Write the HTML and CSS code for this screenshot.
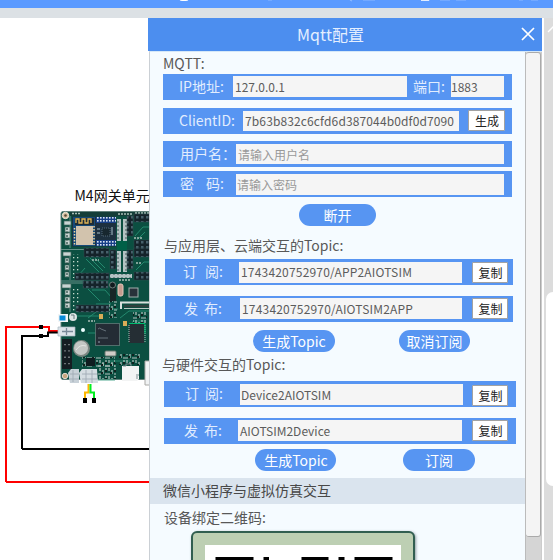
FILE: index.html
```
<!DOCTYPE html>
<html lang="zh-CN">
<head>
<meta charset="utf-8">
<title>Mqtt配置</title>
<link rel="stylesheet" href="styles.css">
</head>
<body>
<header class="topbar">
  <svg width="553" height="8" viewBox="0 0 553 8" fill="none" stroke="#d8e7ff" stroke-width="1.2">
    <path d="M180 0q4 1 8 0" stroke="#fff"/><path d="M268 0h4M350 0l2 1M363 0h12M424 0h6M440 0h10M456 0h10M519 0h4M531 0h7" opacity=".4"/><path d="M421 .4h8" stroke="#fff" opacity=".8"/>
  </svg>
</header>
<div class="toolstrip"></div>
<main class="workspace">
  <svg class="canvas" width="553" height="542" viewBox="0 18 553 542">
    <defs>
      <pattern id="pins" width="5" height="5" patternUnits="userSpaceOnUse"><rect width="5" height="5" fill="#15232a"/><rect x="1" y="1" width="2.5" height="2.5" fill="#47606b"/></pattern>
      <pattern id="bluepins" width="3" height="3" patternUnits="userSpaceOnUse"><rect width="3" height="3" fill="#173f87"/><rect x="1" y="1" width="1.6" height="1.6" fill="#d8e4f3"/></pattern>
      <pattern id="greypins" width="4" height="4" patternUnits="userSpaceOnUse"><rect width="4" height="4" fill="#b4c2c3"/><rect x="1" y="1" width="2" height="2" fill="#7b8d8f"/></pattern>
      <pattern id="parts" width="9" height="8" patternUnits="userSpaceOnUse"><path d="M1 0v3M4 2v4M7 0v2M6 6h3M0 6h2" stroke="#b4c4bf" stroke-width="1.2"/><path d="M2 5h2M6 3h2" stroke="#11221f" stroke-width="2"/></pattern>
      <pattern id="vias" width="4" height="4" patternUnits="userSpaceOnUse"><rect x="1" y="1" width="1.3" height="1.3" fill="#c5dacd"/></pattern>
    </defs>
    <text class="unit" x="74.500" y="201">M4网关单元</text>
    <rect x="61" y="211.500" width="96" height="168" rx="2" fill="#0b4f41" stroke="#61817b"/>
    <rect x="70" y="212" width="80" height="4" fill="#143e38"/>
    <path d="M61 249.500h23M61 281h23M61 283h23M70 216v32M70 254v26M70 286v26" stroke="#7ea29a" stroke-width=".8" fill="none"/>
    <g stroke="#2b987a" stroke-width=".8" fill="none"><path d="M86 259l13 13M90 258l13 13M95 258l10 10M78 276l7-8M135 236l8-9h7M137 240l8-8M137 246h12M136 270l8-8h6M88 289l12 12M92 290h13l7 8M96 304h15M88 318l12-9h18M76 316h23M88 333h7M120 318l9-7h20M133 325v-4h13M90 380h25M110 361h20"/></g>
    <path d="M72 213.500h8M118 214h15M135 213h14M92 260h7M134 238h8M136 263h6M119 280h12M88 321h7" stroke="#a9bfb7" stroke-width="1.300" stroke-dasharray="2 1"/>
    <rect x="72" y="254" width="7" height="24" fill="url(#vias)"/><rect x="72" y="288" width="7" height="24" fill="url(#vias)"/>
    <circle cx="65.500" cy="215.500" r="3.200" fill="#dac4a2" stroke="#f1e7dc"/><circle cx="65.500" cy="215.500" r="1.300" fill="#574b3a"/>
    <g fill="#c9d4d2" stroke="#42675f" stroke-width=".7">
      <rect x="64" y="221" width="7" height="4"/><rect x="65" y="227" width="5" height="5"/><rect x="65" y="233" width="5" height="5"/><rect x="65" y="240" width="5" height="5"/>
      <rect x="63" y="252" width="8" height="4"/><rect x="65" y="258" width="4" height="5"/><rect x="65" y="265" width="4" height="5"/><rect x="65" y="272" width="4" height="5"/>
      <rect x="62" y="284" width="9" height="4"/><rect x="65" y="290" width="5" height="5"/><rect x="65" y="297" width="5" height="5"/><rect x="65" y="303" width="5" height="5"/>
    </g>
    <path d="M67 228v16M67 259v18M67 291v16" stroke="#24463e" stroke-width="1.200" stroke-dasharray="2 1.500"/>
    <path d="M72 216.500h44v30H72z" fill="#1d303f"/><path d="M73 217h22v29H73z" fill="#164a78"/>
    <path d="M75 218h19v7H75z" fill="#1c2c38"/>
    <rect x="76" y="226" width="17" height="19" fill="#d2c3ad"/>
    <path d="M76 223v-4h3v4h3v-4h3v4h3v-4h3v4" fill="none" stroke="#e1b556" stroke-width="1.300"/>
    <path d="M74.500 228v17M94 226v19" stroke="#f1d59b" stroke-width="1.500" stroke-dasharray="1.500 1.500"/>
    <rect x="96" y="217" width="20" height="6" fill="url(#bluepins)"/><rect x="96" y="240" width="20" height="6" fill="url(#bluepins)"/>
    <rect x="102" y="228" width="8" height="8" fill="#17272f" stroke="#53697a" stroke-dasharray="1"/><path d="M97 229h3M97 233h3M112 227v8" stroke="#aac1cc"/>
    <g fill="url(#greypins)"><rect x="117" y="219" width="4" height="22"/><rect x="123" y="219" width="4" height="22"/><rect x="117" y="251" width="4" height="21"/><rect x="123" y="251" width="4" height="21"/><rect x="110" y="274" width="22" height="4"/></g>
    <rect x="117" y="241" width="10" height="9" fill="#006047"/>
    <g fill="url(#pins)" stroke="#334d50" stroke-width=".5">
      <rect x="127" y="216" width="6" height="20"/><rect x="134" y="214" width="16" height="8"/><rect x="134" y="240" width="16" height="9"/><rect x="84" y="248" width="25" height="9"/><rect x="110" y="250" width="6" height="19"/><rect x="127" y="250" width="6" height="19"/><rect x="134" y="248" width="16" height="9"/><rect x="75" y="273" width="34" height="7"/><rect x="134" y="272" width="16" height="8"/><rect x="83" y="281" width="25" height="7"/><rect x="76" y="305" width="33" height="7"/>
    </g>
    <rect x="110" y="284" width="6" height="17" fill="#172627"/><circle cx="112.500" cy="285" r="3" fill="#111b1e" stroke="#71817e"/>
    <rect x="118" y="284" width="5" height="12" rx="2" fill="#c49c8f" stroke="#e5c9bd"/>
    <rect x="129" y="288" width="9" height="9" fill="#28323a" stroke="#a1afad"/><path d="M121 309v-6.500h29" stroke="#d9dfdc" stroke-width="2" fill="none"/><path d="M124 306h26" stroke="#2f403d" stroke-width="2.500"/><path d="M124 308.500h26" stroke="#bac7c2"/>
    <rect x="109" y="301" width="8" height="17" fill="url(#parts)"/><rect x="133" y="312" width="14" height="11" fill="url(#parts)"/>
    <rect x="95.500" y="323.500" width="24" height="22" fill="#242c35" stroke="#8fa09e" stroke-dasharray="1 1"/><path d="M98 329q2-2 3 0l5 2M98 338h10" stroke="#65717a" fill="none"/><circle cx="99" cy="342" r="1" fill="#6c7a85"/>
    <path d="M129 323h15v20h-15z" fill="#252e34"/><path d="M129 325v18M145 325v18" stroke="#aebfba" stroke-dasharray="1 1"/><path d="M129 323.500h16v10" stroke="#00bd71" fill="none"/>
    <rect x="99" y="314" width="4" height="5" fill="#d9ac57"/><rect x="123" y="321" width="4" height="5" fill="#d9ac57"/><circle cx="83" cy="330" r="2" fill="#eff"/>
    <rect x="58" y="314" width="10" height="8" fill="#f2f5f6"/><rect x="59.500" y="315.500" width="6" height="5" fill="#098bd9"/><circle cx="73" cy="317" r="4" fill="#dfe5e5"/><path d="M71 315h3v4" stroke="#65787d" fill="none"/>
    <rect x="62" y="339" width="10" height="30" fill="#151d22"/><path d="M65 344v21M69 344v21" stroke="#9ca4a7" stroke-width="1.300" stroke-dasharray="1.300 5"/>
    <circle cx="81.500" cy="348.500" r="8.500" fill="#7b8681"/><circle cx="81" cy="348" r="7" fill="#c4c7c4"/><path d="M76 350q4-6 10-4" stroke="#e5e6e3" fill="none"/>
    <rect x="105" y="351" width="11" height="5" rx="1" fill="#d0ccc7" stroke="#697870"/>
    <g fill="url(#parts)"><rect x="82" y="357" width="33" height="11"/><rect x="98" y="363" width="18" height="16"/><rect x="119" y="354" width="21" height="11"/></g><path d="M86 358h9v8h-9z" fill="#101d20"/>
    <circle cx="65" cy="376" r="2.700" fill="#c9a77f" stroke="#e2dad0"/>
    <path d="M68 373l3-4h8v14H70z" fill="#c8d1d8"/><path d="M79 373l3-4h15l1 14H81z" fill="#d5dde2"/><path d="M70 374h9M82 374h15M73 370v12M86 370v13M92 370v13M70 379h9M82 379h15" stroke="#a0acb6" stroke-width=".9"/>
    <path d="M122 366h17v13l-2 2h-15z" fill="#f3f4f4"/><path d="M123 366h3v-2h5v2M136 375h3M137 379v-3" fill="none" stroke="#7f8d91"/><path d="M145 361h6v24h-6z" fill="#f1f3f4" stroke="#aaa9a6"/>
    <path d="M6 482V327H49V331H61M6 482H150" fill="none" stroke="#f00" stroke-width="2"/>
    <path d="M22 449V336H48V332.500H59M22 449H150" fill="none" stroke="#000" stroke-width="2"/>
    <path d="M39 325h4v4h-4zM39 334h4v4h-4z"/><path d="M58 327h17v9H58z" fill="#dce3e9" stroke="#abb7c2" stroke-width=".7"/><path d="M62 331.500h11M66.500 328v7" stroke="#788897" stroke-width="1.300"/>
    <path d="M88.500 384v8.500H85v6" fill="none" stroke="#ffb800" stroke-width="2"/><path d="M90.500 384v8.500H94v6" fill="none" stroke="#00ef20" stroke-width="2"/><path d="M83 398h4v5h-4zM92 398h4v5h-4z"/>
  </svg>

  <aside class="dock"><div class="dock-card"></div>
    <svg class="dock-mark" width="9" height="12"><path d="M1 8L7 2" stroke="#fff" stroke-width="1.300"/></svg>
  </aside>

  <section class="dialog">
    <header class="dialog-head"><h1>Mqtt配置</h1>
      <svg class="close" width="14" height="14" viewBox="0 0 14 14"><path d="M1 1L13 13M13 1L1 13" stroke="#fff" stroke-width="1.700"/></svg>
    </header>
    <div class="dialog-body">
      <div class="content">
        <h2 class="caption mqtt">MQTT:</h2>
        <div class="row address"><label class="ip">IP地址:</label><span class="field">127.0.0.1</span><label class="port">端口:</label><span class="field narrow">1883</span></div>
        <div class="row client"><label>ClientID:</label><span class="field hash">7b63b832c6cfd6d387044b0df0d7090</span><button class="small">生成</button></div>
        <div class="row user"><label>用户名：</label><span class="field hint">请输入用户名</span></div>
        <div class="row pass"><label><span class="first">密</span>码:</label><span class="field hint">请输入密码</span></div>
        <div class="actions disconnect"><button class="pill">断开</button></div>
        <h2 class="caption app">与应用层、云端交互的Topic:</h2>
        <div class="row topic app-sub"><label><span class="first">订</span>阅:</label><span class="field">1743420752970/APP2AIOTSIM</span><button class="small">复制</button></div>
        <div class="row topic app-pub"><label><span class="first">发</span>布:</label><span class="field">1743420752970/AIOTSIM2APP</span><button class="small">复制</button></div>
        <div class="actions app-actions"><button class="pill">生成Topic</button><button class="pill">取消订阅</button></div>
        <h2 class="caption device">与硬件交互的Topic:</h2>
        <div class="row topic dev-sub"><label><span class="first">订</span>阅:</label><span class="field">Device2AIOTSIM</span><button class="small">复制</button></div>
        <div class="row topic dev-pub"><label><span class="first">发</span>布:</label><span class="field">AIOTSIM2Device</span><button class="small">复制</button></div>
        <div class="actions dev-actions"><button class="pill">生成Topic</button><button class="pill">订阅</button></div>
        <h2 class="band">微信小程序与虚拟仿真交互</h2>
        <h2 class="caption qr-title">设备绑定二维码:</h2>
        <div class="qr"><div class="qr-code"><svg width="197" height="15"><path d="M10.500 12h38v3h-38zM58.500 12h5.500v3h-5.500zM96.500 12h27v3h-27zM133.500 12h6v3h-6zM149.500 12h38v3h-38z"/></svg></div></div>
      </div>
      <div class="scrollbar"><div class="thumb"></div></div>
    </div>
  </section>
</main>
</body>
</html>
```
FILE: styles.css
```
* { box-sizing: border-box; }
body {
  margin: 0; width: 553px; height: 560px; overflow: hidden; background: #fff;
  font-family: "Noto Sans CJK SC", "Noto Sans", sans-serif;
}
h1, h2 { margin: 0; font-weight: 400; }
button { font-family: inherit; padding: 0; white-space: nowrap; }
.topbar { height: 8px; background: #5a9aff; }
.topbar svg { display: block; }
.toolstrip { height: 10px; background: #dce1e5; }
.workspace { position: relative; height: 542px; }
.canvas { display: block; }
.unit { font-size: 14px; fill: #111; }

.dialog { position: absolute; left: 148px; top: 0; width: 394px; height: 542px; overflow: hidden; }
.dialog-head { display: flex; align-items: center; height: 33px; padding: 0 7px 0 149px; background: #4c8eef; color: #e4efff; }
.dialog-head h1 { flex: 1; font-size: 16px; line-height: 31px; letter-spacing: .1px; }
.close { display: block; margin-bottom: 1px; }
.dialog-body { display: flex; height: 509px; margin-left: 1px; background: #f5fbff; border-top: 1px solid #d5e8f8; border-left: 1px solid #cbd0d5; }
.content { width: 375px; overflow: hidden; }
.caption { font-size: 14px; line-height: 20px; height: 20px; color: #585858; white-space: nowrap; }
.mqtt { margin: 1px 0 1px 13px; }
.row { display: flex; align-items: flex-start; height: 26px; width: 349px; margin-left: 13px; background: #5795f2; white-space: nowrap; }
.row label { font-size: 14px; line-height: 24px; color: #e2edfe; flex: none; }
.row .first { display: inline-block; }
.field { display: block; height: 21px; background: #f5f5f5; color: #5c5c5c; font-size: 12px; line-height: 22px; padding-left: 2px; overflow: hidden; flex: none; }
.hint { color: #999; }
.small { height: 21px; width: 37px; flex: none; border: 1px solid #a2a2a2; border-radius: 1px; background: #fff; color: #222; font-size: 12px; line-height: 18px; padding-left: 1px; }

.address { padding-top: 2px; }
.address .ip { width: 70px; padding-left: 16px; line-height: 21px; }
.address .port { width: 44px; padding-left: 6px; line-height: 21px; }
.address .field { width: 174px; }
.address .narrow { width: 53px; padding-left: 0; }
.client { margin-top: 8px; padding-top: 2px; }
.client label { width: 80px; padding-left: 16px; line-height: 21px; }
.client .field { width: 216px; height: 20px; margin-top: 1px; line-height: 20px; letter-spacing: .13px; }
.client .small { margin-left: 9px; }
.user { margin-top: 7px; padding-top: 3px; }
.pass { margin-top: 4px; padding-top: 3px; }
.user label, .pass label { width: 73px; padding-left: 17px; line-height: 19px; }
.user .field, .pass .field { width: 268px; height: 20px; line-height: 21px; }
.pass .field { height: 21px; padding-left: 1px; }
.pass .first { width: 26px; }

.actions { display: flex; height: 22px; }
.pill { border: 0; border-radius: 11px; height: 22px; background: #5795f2; color: #fff; font-size: 14px; line-height: 22px; }
.disconnect { margin: 7px 0 9px 149px; }
.disconnect .pill { width: 77px; }
.app { margin: 0 0 4px 14px; }
.topic { padding-top: 3px; }
.topic label { width: 74px; padding-left: 18px; line-height: 18px; }
.topic .first { width: 22px; }
.topic .field { width: 223px; }
.topic .small { width: 36px; margin-left: 10px; }
.app-sub, .app-pub { width: 348px; margin-left: 15px; }
.app-sub .field, .app-pub .field { letter-spacing: .19px; line-height: 20px; }
.app-pub { margin-top: 11px; padding-top: 2px; }
.app-pub label { width: 75px; padding-left: 19px; line-height: 20px; }
.app-pub .first, .dev-pub .first { width: 20px; }
.app-pub .field { width: 222px; line-height: 22px; }
.app-actions { margin: 8px 0 3px 103px; gap: 64px; }
.app-actions .pill:first-child { width: 82px; }
.app-actions .pill:last-child { width: 71px; }
.device { margin: 0 0 6px 12px; line-height: 19px; }
.dev-sub, .dev-pub { width: 352px; margin-left: 14px; }
.dev-sub label { width: 76px; padding-left: 21px; }
.dev-sub .first { width: 20px; }
.dev-sub .field { padding-left: 1px; line-height: 22px; }
.dev-sub .small { margin: 1px 0 0 9px; line-height: 17px; }
.dev-pub { margin-top: 11px; padding-top: 2px; }
.dev-pub label { width: 74px; padding-left: 20px; line-height: 20px; }
.dev-pub .field { width: 224px; line-height: 22px; }
.dev-pub .small { line-height: 17px; }
.dev-actions { margin: 5px 0 7px 105px; gap: 67px; }
.dev-actions .pill { line-height: 21px; }
.dev-actions .pill:first-child { width: 81px; padding-left: 1px; }
.dev-actions .pill:last-child { width: 72px; }
.band { height: 26px; padding-left: 13px; background: #dae4ee; color: #484848; font-size: 14px; line-height: 25px; }
.qr-title { margin: 4px 0 3px 14px; line-height: 18px; }
.qr { width: 224px; height: 50px; margin-left: 41px; padding: 12px 12px 0; background: #bdcfb3; border: 2px solid #315e50; border-radius: 6px; box-shadow: 1px 1px 3px #8b9ba0; }
.qr-code { background: #fff; }
.qr-code svg { display: block; }
.scrollbar { width: 17px; background: #d5d5d5; border-right: 1px solid #ccc; border-left: 1px solid #bbb; }
.thumb { height: 485px; background: #f4f4f4; border: 1px solid #aaa; border-width: 1px 1px 1px 0; border-radius: 3px; }

.dock { position: absolute; left: 544px; top: 0; width: 9px; height: 542px; padding: 274px 0 0 2px; background: #dcdcdc; }
.dock-card { width: 7px; height: 194px; background: #fff; border-radius: 7px 0 0 7px; }
.dock-mark { position: absolute; left: 3px; top: 6px; }
```
